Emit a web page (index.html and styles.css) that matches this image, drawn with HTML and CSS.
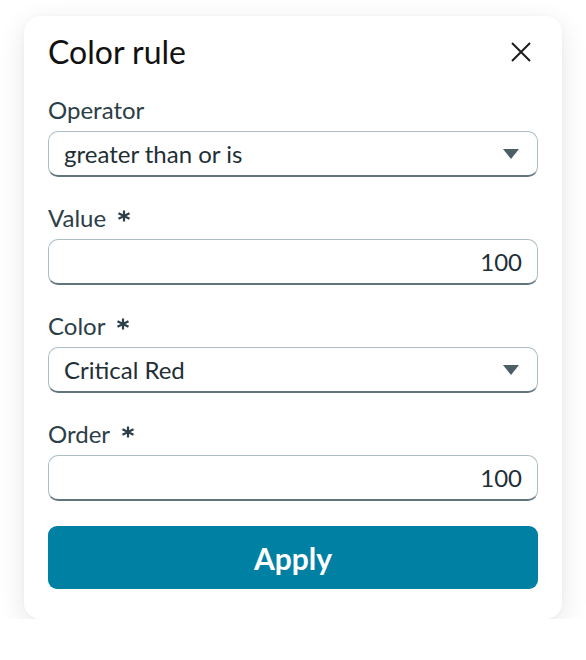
FILE: index.html
```html
<!DOCTYPE html>
<html lang="en">
<head>
<meta charset="utf-8">
<title>Color rule</title>
<link rel="stylesheet" href="styles.css">
</head>
<body>
<div class="card">
  <div class="header">
    <h1 class="title">Color rule</h1>
    <button class="close" aria-label="Close">
      <svg width="20" height="20" viewBox="0 0 20 20"><path d="M1 1 L19 19 M19 1 L1 19" stroke="#1d1d1d" stroke-width="2" fill="none"/></svg>
    </button>
  </div>
  <div class="form">
    <div class="field">
      <div class="label">Operator</div>
      <div class="control select">
        <span class="text">greater than or is</span>
        <span class="caret"></span>
      </div>
    </div>
    <div class="field">
      <div class="label">Value<svg class="req" width="14" height="12" viewBox="0 0 14 12"><path d="M7 0.5 V11.5 M1.5 3.2 L12.5 8.8 M12.5 3.2 L1.5 8.8" stroke="#2c3e47" stroke-width="2.2" fill="none"/></svg></div>
      <div class="control input"><span class="text">100</span></div>
    </div>
    <div class="field">
      <div class="label">Color<svg class="req" width="14" height="12" viewBox="0 0 14 12"><path d="M7 0.5 V11.5 M1.5 3.2 L12.5 8.8 M12.5 3.2 L1.5 8.8" stroke="#2c3e47" stroke-width="2.2" fill="none"/></svg></div>
      <div class="control select">
        <span class="text">Critical Red</span>
        <span class="caret"></span>
      </div>
    </div>
    <div class="field">
      <div class="label">Order<svg class="req" width="14" height="12" viewBox="0 0 14 12"><path d="M7 0.5 V11.5 M1.5 3.2 L12.5 8.8 M12.5 3.2 L1.5 8.8" stroke="#2c3e47" stroke-width="2.2" fill="none"/></svg></div>
      <div class="control input"><span class="text">100</span></div>
    </div>
  </div>
  <button class="apply">Apply</button>
</div>
</body>
</html>
```

FILE: styles.css
```css
html, body {
  margin: 0;
  padding: 0;
  background: #ffffff;
}
body {
  font-family: Lato, "Liberation Sans", sans-serif;
  padding: 16px 24px 0 24px;
}
.card {
  width: 538px;
  box-sizing: border-box;
  background: #fff;
  border-radius: 16px;
  box-shadow: 0 8px 28px rgba(0, 0, 0, 0.1), 0 0 4px rgba(0, 0, 0, 0.03);
  padding: 16px 24px 30px 24px;
  display: flex;
  flex-direction: column;
}
.header {
  display: flex;
  align-items: center;
  justify-content: space-between;
  height: 40px;
}
.title {
  margin: 0;
  font-size: 32px;
  line-height: 40px;
  font-weight: 400;
  color: #111;
}
.close {
  border: 0;
  background: none;
  padding: 0;
  width: 20px;
  height: 20px;
  margin-right: 7px;
  display: flex;
}
.form {
  margin-top: 24px;
  display: flex;
  flex-direction: column;
  gap: 27px;
}
.field {
  display: flex;
  flex-direction: column;
  gap: 7px;
}
.label {
  font-size: 24px;
  line-height: 28px;
  color: #2c3e47;
}
.req {
  margin-left: 11px;
  vertical-align: 5px;
}
.control {
  height: 46px;
  box-sizing: border-box;
  border: 1px solid #adbdc4;
  border-bottom: 2px solid #62757e;
  border-radius: 10px;
  display: flex;
  align-items: center;
  padding: 0 15px;
  font-size: 24px;
  color: #1f2f36;
}
.input {
  justify-content: flex-end;
}
.select {
  justify-content: space-between;
  padding-right: 18px;
}
.caret {
  width: 0;
  height: 0;
  border-left: 8px solid transparent;
  border-right: 8px solid transparent;
  border-top: 10px solid #4b5e66;
}
.apply {
  margin-top: 25px;
  height: 63px;
  border: 0;
  border-radius: 9px;
  background: #0080a3;
  color: #fff;
  font-family: Lato, "Liberation Sans", sans-serif;
  font-weight: 700;
  font-size: 30px;
}
```
